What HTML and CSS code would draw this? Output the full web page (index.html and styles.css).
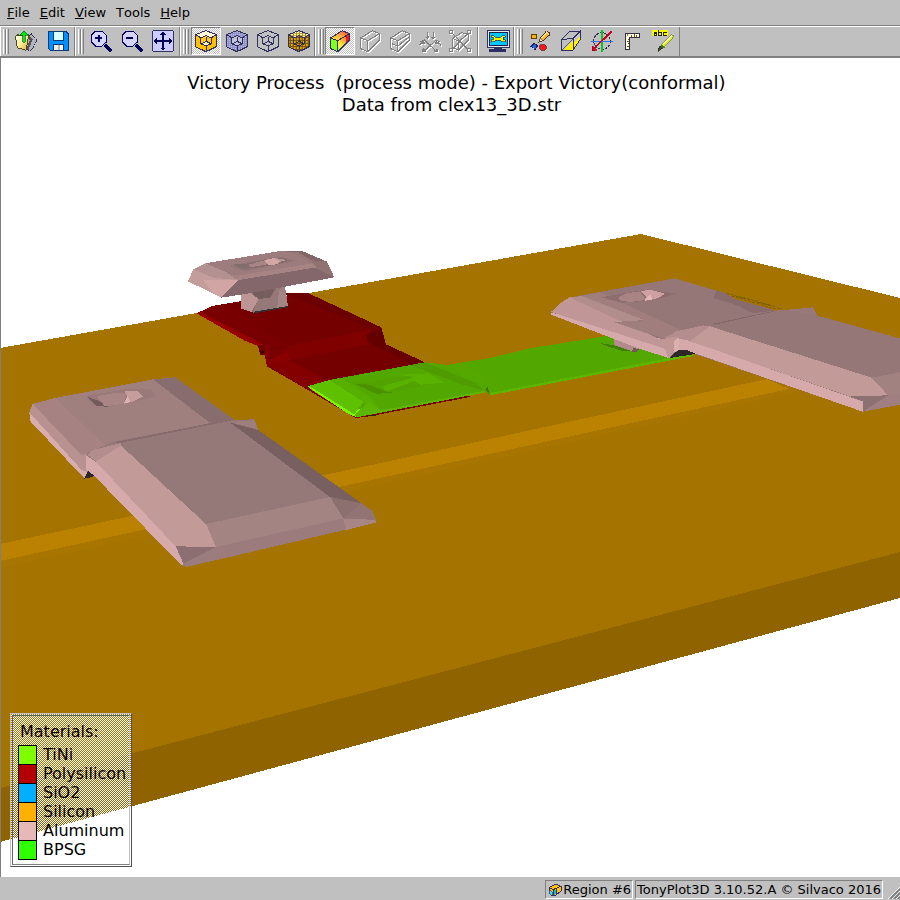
FILE: index.html
```html
<!DOCTYPE html>
<html lang="en">
<head>
<meta charset="utf-8">
<title>TonyPlot3D</title>
<link rel="stylesheet" href="styles.css">
</head>
<body>
<nav class="menubar">
  <button class="menu"><u>F</u>ile</button>
  <button class="menu"><u>E</u>dit</button>
  <button class="menu"><u>V</u>iew</button>
  <button class="menu">Tools</button>
  <button class="menu"><u>H</u>elp</button>
</nav>

<svg class="defs" aria-hidden="true">
  <defs>
    <pattern id="dots" width="6" height="6" patternUnits="userSpaceOnUse"><rect width="6" height="6" fill="#8888b8"/><rect width="4" height="4" fill="#b4b4e8"/></pattern>
    <pattern id="golddots" width="9" height="9" patternUnits="userSpaceOnUse"><rect width="9" height="9" fill="#805800"/><rect width="5" height="6" fill="#e8a800"/></pattern>
    <pattern id="creamdots" width="9" height="6" patternUnits="userSpaceOnUse"><rect width="9" height="6" fill="#a89030"/><rect width="6" height="4" fill="#fff8b0"/></pattern>
    <linearGradient id="rainbow" x1="0" y1="1" x2="1" y2="0"><stop offset="0" stop-color="#60f040"/><stop offset=".4" stop-color="#fff040"/><stop offset=".7" stop-color="#ff9030"/><stop offset="1" stop-color="#e80020"/></linearGradient>
    <linearGradient id="raintop" x1="0" y1="1" x2="1" y2="0"><stop offset="0" stop-color="#fff040"/><stop offset=".5" stop-color="#ffb040"/><stop offset="1" stop-color="#f03030"/></linearGradient>
    <linearGradient id="paper" x1="0" y1="0" x2="1" y2="1"><stop offset="0" stop-color="#fffff0"/><stop offset=".5" stop-color="#fff0a0"/><stop offset="1" stop-color="#d8a828"/></linearGradient>
    <g id="cubelines" fill="none" stroke="#303060" stroke-width="3">
      <path d="M78 32L109 44V80L78 95L46 80V44ZM46 44L62 53M109 44L94 53M78 78V95"/>
      <path d="M78 47L94 54V71L78 78L62 71V54ZM78 50V64M78 64L66 70M78 64L91 70"/>
    </g>
    <g id="wedge"><path d="M35 54L70 32L91 41V61L56 95L35 86ZM35 54L56 62L91 41M56 62V95" fill="none" stroke-width="3"/></g>
    <path id="slot" d="M38 71L56 79L91 50" fill="none" stroke-width="3"/>
    <path id="probe" d="M55 36V54M50 50L55 56L60 50M72 36V54M67 50L72 56L77 50M34 66L46 60L82 94M93 66L81 60L45 94M31 76L40 66L47 73M96 76L87 66L80 73M41 88V95H51M86 88V95H76" fill="none" stroke-width="3"/>
    <path id="crop" d="M32 32H41V41H32ZM84 32H93V41H84ZM32 86H41V95H32ZM84 86H93V95H84ZM42 42L84 86M84 42L42 86M40 55L68 38L87 43V61L58 90L40 82ZM40 55L58 63L87 43M58 63V90" fill="none" stroke-width="3"/>
  </defs>
</svg>

<div class="toolbar">
  <div class="group wide">
    <span class="handle"></span>
    <button class="tool" aria-label="Open"><svg viewBox="42 87 72 72"><path d="M84 108L94 102L111 121L93 153L76 148Z" fill="#b4b4bc" stroke="#303060" stroke-width="3" stroke-dasharray="6 2"/><path d="M82 108L94 119L82 148" fill="none" stroke="#555" stroke-width="7"/><path d="M46 110L54 104L60 108L84 103V118L78 151L52 143Z" fill="url(#paper)" stroke="#504820" stroke-width="3"/><path d="M72 92L84 105H76V126H68V105H60Z" fill="#00e818" stroke="#005808" stroke-width="2"/></svg></button>
    <button class="tool" aria-label="Save"><svg viewBox="138 87 72 72"><path d="M146 94H198L204 100V152H152L146 146Z" fill="#0090ff" stroke="#103870" stroke-width="3"/><path d="M159 94H190V120H159Z" fill="#d8ffff" stroke="#103870" stroke-width="3"/><path d="M159 132H190V152H159Z" fill="#b8b8b8" stroke="#103870" stroke-width="3"/><path d="M162 135H173V150H162Z" fill="#eee"/><path d="M180 135H188V150H180Z" fill="#fff"/></svg></button>
  </div>
  <div class="group zooms">
    <span class="handle"></span>
    <button class="tool" aria-label="Zoom in"><svg viewBox="264 87 72 72"><path d="M312 135L331 154" stroke="#000058" stroke-width="9"/><path d="M283 93H302L316 106V126L303 138H283L270 125V106Z" fill="#d4d4ff" stroke="#000058" stroke-width="3"/><path d="M282 115H304M293 104V127" stroke="#000058" stroke-width="6"/></svg></button>
    <button class="tool" aria-label="Zoom out"><svg viewBox="264 87 72 72"><path d="M312 135L331 154" stroke="#000058" stroke-width="9"/><path d="M283 93H302L316 106V126L303 138H283L270 125V106Z" fill="#d4d4ff" stroke="#000058" stroke-width="3"/><path d="M282 115H304" stroke="#000058" stroke-width="6"/></svg></button>
    <button class="tool" aria-label="Fit view"><svg viewBox="453 87 72 72"><rect x="457" y="92" width="63" height="62" rx="4" fill="#ccccff" stroke="#303068" stroke-width="3"/><path d="M489 97V149M462 123H516" stroke="#000058" stroke-width="4"/><path d="M480 104H498L489 94ZM480 143H498L489 153ZM470 114V132L459 123ZM508 114V132L519 123Z" fill="#000058"/></svg></button>
  </div>
  <div class="group">
    <span class="handle"></span>
    <button class="tool pressed" aria-label="Solid"><svg viewBox="42 27 72 72"><path d="M78 32L109 44V80L78 95L46 80V44Z" fill="#ffc000"/><path d="M78 32L109 44L94 54L78 47L62 54L46 44Z" fill="#fffbd8"/><path d="M78 47L94 54V71L78 78L62 71V54Z" fill="#ffc820"/><path d="M78 64L91 71L78 78L65 71Z" fill="#fff4c0"/><use href="#cubelines"/></svg></button>
    <button class="tool" aria-label="Translucent"><svg viewBox="42 27 72 72"><path d="M78 32L109 44V80L78 95L46 80V44Z" fill="url(#dots)"/><path d="M78 46L94 54V70L78 78L62 70V54Z" fill="#c0c0d8"/><use href="#cubelines"/></svg></button>
    <button class="tool" aria-label="Outline"><svg viewBox="42 27 72 72"><use href="#cubelines"/></svg></button>
    <button class="tool" aria-label="Mesh"><svg viewBox="42 27 72 72"><path d="M78 32L109 44V80L78 95L46 80V44Z" fill="url(#golddots)"/><path d="M78 32L109 44L94 54L78 47L62 54L46 44Z" fill="url(#creamdots)"/><use href="#cubelines"/></svg></button>
  </div>
  <div class="group tight">
    <span class="handle"></span>
    <button class="tool pressed" aria-label="Contour"><svg viewBox="27 27 72 72"><path d="M35 54L70 32L91 41V61L56 95L35 86Z" fill="url(#rainbow)"/><path d="M35 54L56 62V95L35 86Z" fill="#80ff20"/><path d="M35 54L70 32L91 41L56 62Z" fill="url(#raintop)"/><path d="M82 46L91 41V61L82 69Z" fill="#f01828"/><use href="#wedge" stroke="#303060"/></svg></button>
    <button class="tool" aria-label="Slice" disabled><svg viewBox="27 27 72 72"><use href="#wedge" x="3" y="3" stroke="#fff"/><use href="#wedge" stroke="#808080"/></svg></button>
    <button class="tool" aria-label="Cut" disabled><svg viewBox="27 27 72 72"><use href="#wedge" x="3" y="3" stroke="#fff"/><use href="#slot" x="3" y="3" stroke="#fff"/><use href="#wedge" stroke="#808080"/><use href="#slot" stroke="#808080"/></svg></button>
    <button class="tool" aria-label="Probe" disabled><svg viewBox="27 27 72 72"><use href="#probe" x="3" y="3" stroke="#fff"/><use href="#probe" stroke="#808080"/><path d="M31 74L44 63L52 70M96 74L83 63L75 70M42 84V94H54ZM85 84V94H73Z" fill="#808080"/></svg></button>
    <button class="tool" aria-label="Crop volume" disabled><svg viewBox="27 27 72 72"><use href="#crop" x="3" y="3" stroke="#fff"/><use href="#crop" stroke="#808080"/></svg></button>
  </div>
  <div class="group single">
    <button class="tool" aria-label="Display settings"><svg viewBox="414 27 72 72"><rect x="418" y="32" width="65" height="50" fill="#e8e8e8" stroke="#303060" stroke-width="3"/><rect x="424" y="38" width="53" height="38" fill="#00c8ff" stroke="#202050" stroke-width="3"/><path d="M438 82H462V88H474V96H424V88H438Z" fill="#303060"/><path d="M430 47H438L443 53H457L462 47H471V52H466V59H471V65H462L457 60H443L438 65H430V59H435V52H430Z" fill="#fff000" stroke="#303040" stroke-width="2"/></svg></button>
  </div>
  <div class="group">
    <span class="handle"></span>
    <button class="tool" aria-label="Markers"><svg viewBox="57 27 72 72"><path d="M67 44H82V54H67Z" fill="#ffb000" stroke="#604000" stroke-width="3"/><path d="M94 74H108L111 78V87L107 90H96L92 86V77Z" fill="#f01818" stroke="#600010" stroke-width="2"/><path d="M66 80L75 70L86 77L78 89Z" fill="#2868e0" stroke="#202060" stroke-width="3"/><path d="M66 84L75 86" stroke="#a8d0ff" stroke-width="4"/><path d="M90 66L94 54L112 34L122 39L121 45L102 62Z" fill="#ffb030" stroke="#503010" stroke-width="3"/><path d="M90 66L94 55L102 62Z" fill="#fff0d0" stroke="#333" stroke-width="2"/><path d="M98 54L113 38" stroke="#fff080" stroke-width="3"/><path d="M110 35L121 43" stroke="#ffd0b0" stroke-width="4"/></svg></button>
    <button class="tool" aria-label="Cut plane"><svg viewBox="150 27 72 72"><path d="M192 58L213 38V58L192 91Z" fill="#c8c8c8"/><path d="M192 60V89L164 89Z" fill="#fff000"/><path d="M195 82L212 60V50L195 68Z" fill="#fff000"/><path d="M158 58L182 35L214 33V58L192 91H158ZM158 58L192 56L214 33M192 56V91" fill="none" stroke="#303060" stroke-width="3"/><path d="M158 90L192 58" stroke="#303060" stroke-width="2"/></svg></button>
    <button class="tool" aria-label="Rotate"><svg viewBox="243 27 72 72"><circle cx="279" cy="63" r="25" fill="none" stroke="#303058" stroke-width="3" stroke-dasharray="8 3"/><path d="M279 31V95" stroke="#00c820" stroke-width="5"/><path d="M247 64H312" stroke="#2878e8" stroke-width="5"/><path d="M308 34L257 84" stroke="#d00020" stroke-width="5"/><path d="M249 92V77L265 91Z" fill="#e00020" stroke="#900020" stroke-width="2"/></svg></button>
    <button class="tool" aria-label="Ruler"><svg viewBox="336 27 72 72"><path d="M349 39H392V52H362V89H349Z" fill="#fffce0" stroke="#303040" stroke-width="3"/><path d="M368 45V50M375 43V50M382 45V50M356 57H361M354 64H361M356 71H361M354 78H361" stroke="#605820" stroke-width="3"/><circle cx="356" cy="45" r="3" fill="#777"/></svg></button>
    <button class="tool" aria-label="Annotate"><svg viewBox="426 27 72 72"><rect x="427" y="30" width="47" height="18" fill="#f8f800"/><path d="M432 36H440V45H432V40H440M446 31V45H454V37H446M470 37H461V45H470" fill="none" stroke="#202010" stroke-width="3"/><path d="M452 76L485 44L493 48L461 83Z" fill="#d8f028" stroke="#707818" stroke-width="2"/><path d="M458 74L486 47" stroke="#f8ffa0" stroke-width="3"/><path d="M450 78L459 84L451 89L445 94V86Z" fill="#404828" stroke="#222" stroke-width="2"/><path d="M453 75L463 84" stroke="#488000" stroke-width="4"/></svg></button>
  </div>
</div>

<main class="view">
  <svg class="scene" viewBox="1 58 899 819" preserveAspectRatio="xMinYMin slice" role="img" aria-label="3D device structure">
    <path d="M0 348L641 234L900 298V552L0 788Z" fill="#a57300"/>
    <path d="M0 788L900 552V598L0 842Z" fill="#8f6400"/>
    <path d="M0 561L789 389L800 391L0 568Z" fill="#a87500"/>
    <path d="M0 544L390 461L540 428L767 379L789 389L604 429L339 487L0 561Z" fill="#ba8200"/>

    <g transform="translate(170 230) scale(.33333)">
      <path d="M80 250L126 228L210 214L414 189L632 291L648 343L765 397L480 470L414 480L291 409L284 376L262 345L222 331Z" fill="#740000"/>
      <path d="M80 250L92 246L300 352L283 356L222 331Z" fill="#980000"/>
      <path d="M92 246L126 228L175 222L355 347L300 354Z" fill="#780000"/>
      <path d="M340 190L414 189L632 291L608 297Z" fill="#6c0000"/>
      <path d="M355 347L608 298L588 315L597 343L360 389L345 360Z" fill="#800000"/>
      <path d="M284 358L350 363L360 389L291 405Z" fill="#8a0000"/>
      <path d="M291 395L350 363L296 360Z" fill="#780000"/>
      <path d="M291 405L357 389L470 452L414 480Z" fill="#840000"/>
      <path d="M588 315L634 293L648 343L620 352L595 338Z" fill="#640000"/>
      <path d="M620 350L648 343L765 397L725 402Z" fill="#680000"/>
      <path d="M263 346H285L286 375L271 374Z" fill="#700000"/>
      <path d="M273 370L277 360L285 370Z" fill="#1c0800"/>
      <path d="M213 175L345 170L354 228L250 248L213 235Z" fill="#8a6d6d"/>
      <path d="M213 183H246L265 207L245 246L213 235Z" fill="#bd9595"/>
      <path d="M232 178L315 172L301 203L265 207Z" fill="#755e5d"/>
      <path d="M265 207L301 203L325 170L345 170L354 228L250 246Z" fill="#9c7f7e"/>
      <path d="M301 203L328 172L335 195L320 234L250 246L265 207Z" fill="#957877"/>
      <path d="M327 180L345 188L354 228L322 232Z" fill="#a48584"/>
      <path d="M245 246L354 228V232L260 249Z" fill="#333"/>
      <path d="M54 154L70 118L106 100L330 63H396L471 95L493 142L250 188L154 203Z" fill="#967978"/>
      <path d="M70 118L106 100L205 150L154 203L54 154Z" fill="#c49c9b"/>
      <path d="M100 150H207L154 203L130 190Z" fill="#d0a5a4"/>
      <path d="M70 118L106 101L165 124L205 150L130 143Z" fill="#b39190"/>
      <path d="M106 100L330 63L366 67L425 100L207 137L165 122Z" fill="#9c7c7c"/>
      <path d="M207 150L435 112L493 142L250 188L154 203Z" fill="#83676a"/>
      <path d="M205 137L425 100L440 112L207 150L180 132Z" fill="#a58483"/>
      <path d="M330 63H396L471 95L425 91L385 67Z" fill="#836768"/>
      <path d="M425 91L470 95L493 142L440 112Z" fill="#907272"/>
      <path d="M176 107L330 80L382 92L220 124Z" fill="#937575"/>
      <path d="M190 103L241 100L275 91L335 82L360 92L315 105L220 118L205 112Z" fill="#866d6d"/>
      <path d="M235 104L288 90L292 103L242 112Z" fill="#a88484"/>
      <path d="M283 90L313 84L331 94L320 103L295 106Z" fill="#d2a6a5"/>
      <path d="M314 84L350 90L331 95Z" fill="#b89393"/>

      <path d="M414 474L550 559L595 556L900 495V501L598 559L557 564L414 480Z" fill="#760000"/>
      <path d="M415 472L478 450L765 397L830 405L960 384L1080 355L1310 318L1388 330L1500 350L1570 376L960 494L945 483L560 562L535 552Z" fill="#53a800"/>
      <path d="M415 472L535 552L560 562L575 540L415 468Z" fill="#7cf800"/>
      <path d="M415 468L478 450L580 515L553 553L440 482Z" fill="#5fc000"/>
      <path d="M478 450L516 446L600 500L630 540L605 543L578 512Z" fill="#57b000"/>
      <path d="M553 555L595 517L632 541L945 482L948 487L560 562Z" fill="#5cb600"/>
      <path d="M553 461L770 430L825 458L625 492Z" fill="#52a200"/>
      <path d="M553 461L598 464L648 484L668 488L620 492Z" fill="#4b9200"/>
      <path d="M635 469L732 442L690 434L775 430L825 458L752 464L730 454L650 484Z" fill="#5ab200"/>
      <path d="M720 405L765 397L915 458L945 483L872 462Z" fill="#4f9c00"/>
      <path d="M825 405L880 402L955 447L930 460Z" fill="#55a800"/>
      <path d="M946 480L952 470L960 494Z" fill="#3d7600"/>
      <path d="M960 489L1570 370V378L960 496Z" fill="#5cb600"/>
      <path d="M597 556L617 554V557L604 559Z" fill="#222"/>
    </g>

    <g transform="translate(540 230) scale(.33333)">
      <path d="M180 339L230 347L280 364H253L205 350Z" fill="#408000"/>
      <path d="M221 325H310L290 364L270 362L222 345Z" fill="#b28c8c"/>
      <path d="M280 353L298 359L290 365H275Z" fill="#72595b"/>
      <path d="M560 190L725 237M575 198L710 238M595 198L700 228" fill="none" stroke="#806000" stroke-width="3" stroke-dasharray="9 4"/>
      <path d="M33 248L60 220L102 200L404 145L530 182L585 207L705 242L820 233L832 257L1080 325V524L970 545L450 367L388 384L300 357Z" fill="#957777"/>
      <path d="M33 248L360 325L390 385L300 357L33 254Z" fill="#d6aaaa"/>
      <path d="M33 246L60 220L90 201L360 328L410 320V350L380 358Z" fill="#c09796"/>
      <path d="M88 202L130 198L320 270L220 276L320 310Z" fill="#b18d8c"/>
      <path d="M125 198L180 187L425 302L370 325L220 276L315 271Z" fill="#a17e7e"/>
      <path d="M530 182L555 188L585 207L705 241L640 250L575 220L520 205Z" fill="#886b6c"/>
      <path d="M183 202L313 179L410 190L300 214L245 218Z" fill="#8c6e6f"/>
      <path d="M235 203L258 190L300 184L318 210L270 216L240 211Z" fill="#a98484"/>
      <path d="M302 184L330 179L375 191L355 204L315 213L318 198Z" fill="#cda1a1"/>
      <path d="M315 212L330 192L338 208Z" fill="#e7b7b7"/>
      <path d="M376 193L400 187L390 197L350 207Z" fill="#8b6b6c"/>
      <path d="M515 282L705 242L700 245L525 284Z" fill="#846769"/>
      <path d="M370 325L410 304L490 286L515 290L450 335Z" fill="#b48e8e"/>
      <path d="M412 325L450 333L970 515L968 545L450 365L404 360Z" fill="#d6aaaa"/>
      <path d="M450 334L510 289L995 443L1044 496L970 499L932 500Z" fill="#c29b99"/>
      <path d="M365 329L410 320L412 360L385 384Z" fill="#c09795"/>
      <path d="M402 333L418 323V359L402 368Z" fill="#ddb0b0"/>
      <path d="M735 240L820 232L832 257Z" fill="#987a79"/>
      <path d="M995 443L1080 427V495L1044 496Z" fill="#a28181"/>
      <path d="M932 499L1044 496L970 544L968 513Z" fill="#8d7071"/>
      <path d="M970 544L1044 496L1080 492V524Z" fill="#9f7f7f"/>
      <path d="M388 384L415 360H442L467 372Z" fill="#2e2727"/>
    </g>

    <g transform="translate(0 360) scale(.33333)">
      <path d="M88 157L98 132L165 114L460 58L526 52L704 180L763 178L775 210L1117 453L1130 487L563 620L547 619L285 350L252 354L92 185Z" fill="#957878"/>
      <path d="M88 157L250 320L262 325V350L252 354L92 185Z" fill="#d8adad"/>
      <path d="M88 157L98 132L245 286L262 280L260 335L245 330Z" fill="#b89291"/>
      <path d="M98 132L165 114L315 256L245 286Z" fill="#a68382"/>
      <path d="M165 114L460 58L632 190L340 245L315 256Z" fill="#a07f7f"/>
      <path d="M460 59L526 52L704 180L632 190Z" fill="#886d6e"/>
      <path d="M256 108L375 88L452 86L468 110L325 141L280 137Z" fill="#997979"/>
      <path d="M262 110L300 124L325 141L290 137Z" fill="#735a5b"/>
      <path d="M290 109L350 98L380 100L370 132L315 139Z" fill="#a98585"/>
      <path d="M374 94L410 92L428 110L400 124L372 131L383 112Z" fill="#c59d9d"/>
      <path d="M372 130L383 108L391 126Z" fill="#e0b1b1"/>
      <path d="M340 247L632 189L690 183L370 249Z" fill="#876a6b"/>
      <path d="M262 284L280 270L362 249L365 258L290 305Z" fill="#b48e8e"/>
      <path d="M258 286L287 305L551 580L547 619L285 350L258 330Z" fill="#d6aaaa"/>
      <path d="M287 305L363 257L618 492L648 561L527 559Z" fill="#c29b99"/>
      <path d="M365 258L370 247L685 184L990 411L618 492Z" fill="#957878"/>
      <path d="M691 188L775 210L1085 430L990 411Z" fill="#785f60"/>
      <path d="M691 186L763 181L774 208Z" fill="#9d7f7e"/>
      <path d="M618 492L990 411L1030 475L648 561Z" fill="#a48383"/>
      <path d="M648 561L1030 475L1130 487L655 599Z" fill="#9b7b7c"/>
      <path d="M990 411L1085 430L1030 474Z" fill="#8c7070"/>
      <path d="M1030 474L1085 430L1117 453L1122 480Z" fill="#927475"/>
      <path d="M1030 477L1122 479L1130 487L1040 510Z" fill="#a98686"/>
      <path d="M527 559L648 561L550 610Z" fill="#8c7071"/>
      <path d="M648 561L656 598L563 620L547 614Z" fill="#9c7d7d"/>
      <path d="M252 356L264 333L284 348L272 352Z" fill="#2e2727"/>
    </g>
  </svg>

  <h1 class="title">Victory Process&nbsp; (process mode) - Export Victory(conformal)<span class="sub">Data from clex13_3D.str</span></h1>

  <section class="legend">
    <h2>Materials:</h2>
    <ul>
      <li><i class="swatch tini"></i>TiNi</li>
      <li><i class="swatch poly"></i>Polysilicon</li>
      <li><i class="swatch sio2"></i>SiO2</li>
      <li><i class="swatch silicon"></i>Silicon</li>
      <li><i class="swatch aluminum"></i>Aluminum</li>
      <li><i class="swatch bpsg"></i>BPSG</li>
    </ul>
  </section>
</main>

<footer class="status">
  <span class="cell"><svg class="region" viewBox="0 0 42 42"><path d="M3 14L24 3L39 10V24L24 36L15 39L3 31Z" fill="#ffc000" stroke="#303060" stroke-width="3"/><path d="M3 21L13 26V38L3 32Z" fill="#40e0f0" stroke="#303060" stroke-width="2"/><path d="M17 24L24 19V33L17 38Z" fill="#18b8e8"/><path d="M3 14L15 20L39 10M15 20V38M26 18V33" fill="none" stroke="#303060" stroke-width="3"/></svg>Region #6</span>
  <span class="cell">TonyPlot3D 3.10.52.A © Silvaco 2016</span>
  <svg class="grip" viewBox="0 0 12 12"><path d="M0 12L12 0M4 12L12 4M8 12L12 8" stroke="#fff"/><path d="M2 12L12 2M6 12L12 6M10 12L12 10" stroke="#808080" stroke-width="2"/></svg>
</footer>
</body>
</html>
```
FILE: styles.css
```css
* { box-sizing: border-box; }

body {
  margin: 0;
  height: 100vh;
  display: flex;
  flex-direction: column;
  background: #c0c0c0;
  color: #000;
  font: 13px/16px "DejaVu Sans", sans-serif;
  overflow: hidden;
}

button {
  border: 0;
  padding: 0;
  background: none;
  font: inherit;
  color: inherit;
}

.defs { position: absolute; width: 0; height: 0; }

.menubar {
  display: flex;
  flex: none;
  height: 26px;
  padding-left: 2px;
  border-bottom: 1px solid #808080;
  font-kerning: none;
}
.menu { padding: 0 5px; font-kerning: none; }

.toolbar {
  display: flex;
  flex: none;
  height: 32px;
  border-top: 1px solid #fff;
  border-bottom: 2px solid #808080;
}
.group {
  display: flex;
  align-items: flex-start;
  gap: 1px;
  padding-left: 2px;
  border-left: 1px solid #fff;
  border-right: 1px solid #808080;
}
.group.wide { gap: 2px; padding-right: 1px; }
.group.zooms { padding-right: 1px; }
.group.tight { gap: 0; padding-right: 2px; }
.group.single { padding-left: 4px; }
.handle {
  width: 6px;
  height: 25px;
  margin: 2px 1px 0 0;
  background: linear-gradient(90deg, #fff 1px, #c0c0c0 1px 2px, #808080 2px 3px, #fff 3px 4px, #c0c0c0 4px 5px, #808080 5px);
}
.wide .handle { margin-right: 0; }
.tool {
  display: grid;
  place-items: center;
  width: 30px;
  height: 28px;
}
.tool svg { width: 24px; height: 24px; shape-rendering: crispEdges; }
.pressed {
  border: 1px solid;
  border-color: #808080 #fff #fff #808080;
  background: conic-gradient(#fff 25%, #c0c0c0 0 50%, #fff 0 75%, #c0c0c0 0) 0 0 / 2px 2px;
}

.view {
  position: relative;
  flex: 1;
  min-height: 0;
  background: #fff;
  border-left: 1px solid #808080;
  overflow: hidden;
}
.scene {
  display: block;
  width: 100%;
  height: 100%;
  shape-rendering: crispEdges;
}
.title {
  position: absolute;
  top: 14px;
  left: 0;
  right: 0;
  margin: 0;
  padding-left: 12px;
  text-align: center;
  font: 18px/22px "DejaVu Sans", sans-serif;
}
.sub { display: block; padding-right: 10px; }

.legend {
  position: absolute;
  left: 9px;
  bottom: 10px;
  width: 122px;
  padding: 8px 0 7px 7px;
  border: 1px solid;
  border-color: #c0c0c0 #505050 #505050 #c0c0c0;
  background: conic-gradient(#fff 25%, transparent 0 50%, #fff 0 75%, transparent 0) 0 0 / 2px 2px;
  font: 16px/19px "DejaVu Sans", sans-serif;
}
.legend::before {
  content: "";
  position: absolute;
  inset: 1px;
  border: 1px solid;
  border-color: #606060 #c0c0c0 #808080 #606060;
}
.legend h2 { margin: 0 0 4px 2px; font: inherit; }
.legend ul { margin: 0; padding: 0; list-style: none; }
.legend li { display: flex; gap: 6px; }
.swatch { width: 19px; height: 20px; margin-bottom: -1px; border: 1px solid #000; flex: none; }
.tini { background: #80ff00; }
.poly { background: #b40000; }
.sio2 { background: #00b0ff; }
.silicon { background: #ffb000; }
.aluminum { background: #e6b8b8; }
.bpsg { background: #30ff00; }

.status {
  display: flex;
  flex: none;
  justify-content: flex-end;
  gap: 2px;
  height: 23px;
  padding: 3px 0 1px;
}
.cell {
  display: flex;
  align-items: center;
  padding: 0 1px;
  border: 1px solid;
  border-color: #808080 #fff #fff #808080;
}
.region { width: 14px; height: 14px; margin: 0 1px; shape-rendering: crispEdges; }
.grip { width: 12px; height: 12px; margin-left: 3px; align-self: flex-end; }
```
